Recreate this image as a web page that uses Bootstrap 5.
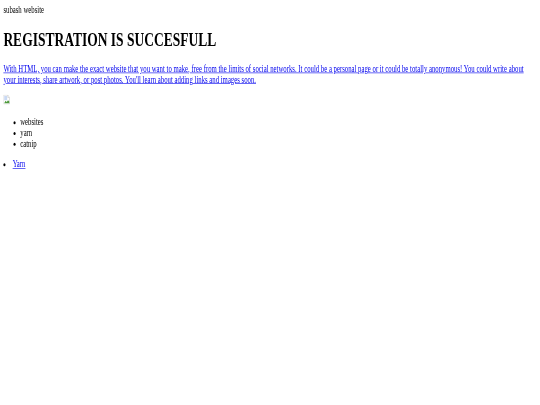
<!DOCTYPE html>
<html lang="en">
<head>
<meta charset="utf-8">
<title>subash website</title>
<link href="https://cdn.jsdelivr.net/npm/bootstrap@5.3.0/dist/css/bootstrap.min.css" rel="stylesheet">
<style>
html, body { background: #fff; margin: 0; padding: 0; }
.page-shell { width: 540px; height: 405px; overflow: hidden; }
.page-canvas { width: 1280px; height: 675px; padding: 8px; transform: scale(.421875, .6); transform-origin: 0 0; filter: blur(.65px); font-family: "Liberation Serif", "Times New Roman", serif; font-size: 16px; line-height: normal; color: #000; }
.page-canvas p { margin: 0 0 16px; }
.site-title { font-family: inherit; font-weight: 700; font-size: 32px; line-height: normal; margin: 21.44px 0; color: #000; }
.page-canvas a { color: #00e; text-decoration: underline; }
.pic-line { display: flex; height: 21.5px; align-items: flex-start; }
.topic-list { list-style: disc; padding-left: 40px; margin: 16px 0; }
.yarn-item { list-style: disc inside; display: list-item; margin: 0; padding: 0; }
</style>
</head>
<body>
<div class="page-shell">
<div class="page-canvas">
<p>subash website</p>
<h1 class="site-title">REGISTRATION IS SUCCESFULL</h1>
<p><a href="#">With HTML, you can make the exact website that you want to make, free from the limits of social networks. It could be a personal page or it could be totally anonymous! You could write about your interests, share artwork, or post photos. You'll learn about adding links and images soon.</a></p>
<div class="pic-line"><svg width="16" height="16" viewBox="0 0 16 16" aria-label="broken image"><path d="M.5.5h10l4 4v11H.5z" fill="#fff" stroke="#c4c4c4"/><path d="M10.500.5v4h4" fill="#eee" stroke="#c4c4c4"/><path d="M2 2h7v7H2z" fill="#c9d9f4"/><path d="M2 14l3-4 3 2 3-3 3 2v3z" fill="#4f9a3c"/></svg></div>
<ul class="topic-list"><li>websites</li><li>yarn</li><li>catnip</li></ul>
<ul class="list-unstyled m-0"><li class="yarn-item"><a href="#">Yarn</a></li></ul>
</div>
</div>
<script src="https://cdn.jsdelivr.net/npm/bootstrap@5.3.0/dist/js/bootstrap.bundle.min.js"></script>
</body>
</html>
